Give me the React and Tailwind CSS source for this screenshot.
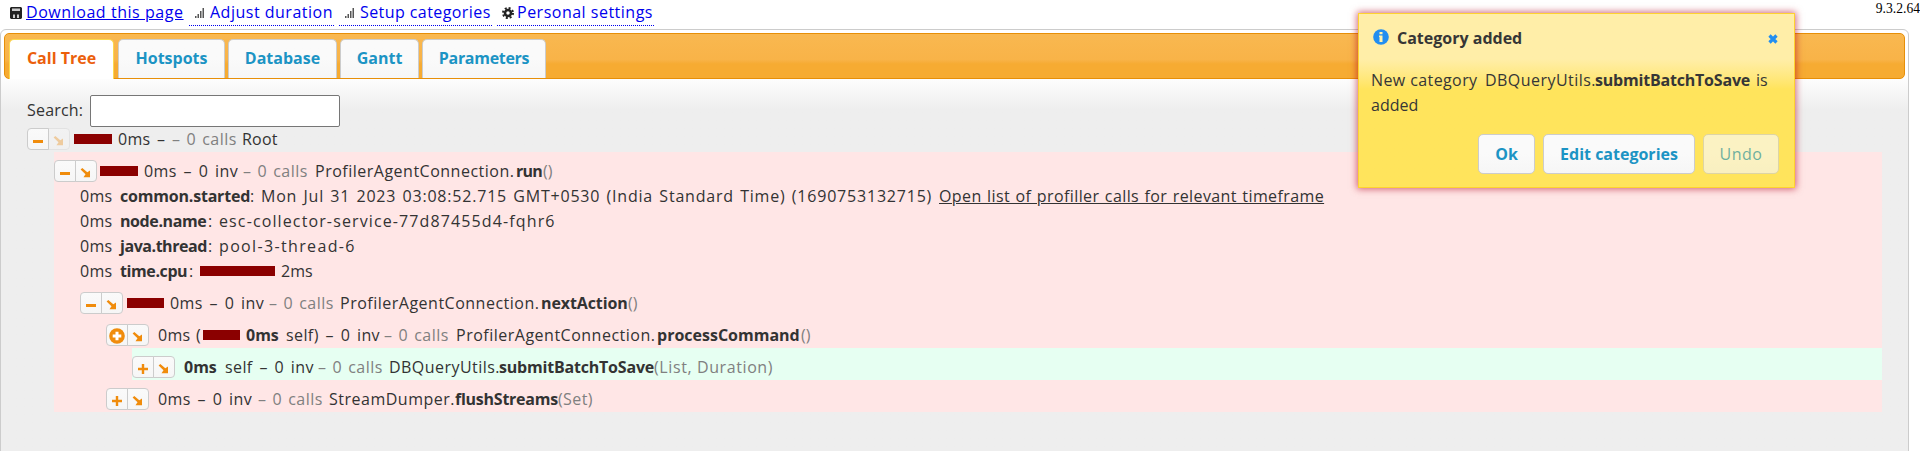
const dim = 'text-[#808080]';
const calls = 'text-[#808080] tracking-[0.45px] [word-spacing:1.5px]';
const inv = 'tracking-[0.4px] [word-spacing:2.2px]';

function Seg({ c = '', children }) {
  return <span className={`block shrink-0 whitespace-pre ${c}`}>{children}</span>;
}

function Bar({ c = 'w-[38px] mr-[6px]' }) {
  return <span className={`relative -top-px block h-[10px] shrink-0 bg-[#8b0000] ${c}`} />;
}

function Glyph({ kind }) {
  return (
    <svg width="16" height="16" viewBox="0 -1 16 16" className="block shrink-0 overflow-visible">
      {kind === 'minus' && <path d="M3 8h10v3H3z" fill="#f08c0c" />}
      {kind === 'plus' && <path d="M6.800 4h2.400v3.800H13v2.400H9.200V14H6.800v-3.800H3V7.800h3.800z" fill="#f08c0c" />}
      {kind === 'circle' && (
        <>
          <circle cx="8" cy="8" r="7.8" fill="#f08c0c" />
          <path d="M6.500 3.700h3v2.800h2.800v3H9.500v2.800h-3V9.500H3.700v-3h2.800z" fill="#fff" />
        </>
      )}
      {kind === 'arrow' && (
        <path d="M2.600 5.600 4.300 4l5 4.300 2.700-1.800V13.200H5.500L7.500 10.300z" fill="#f08c0c" />
      )}
    </svg>
  );
}

function Buttons({ kind, off = false, c = '' }) {
  return (
    <span className={`mt-[8px] flex h-[22px] shrink-0 self-start ${c}`}>
      <span className="flex w-[22px] items-center justify-center rounded-l-[4px] border border-[#ccc] bg-linear-to-b from-[#fafafa] to-[#f6f6f6]">
        <Glyph kind={kind} />
      </span>
      <span
        className={`-ml-px flex w-[22px] items-center justify-center rounded-r-[4px] border border-[#ccc] bg-linear-to-b from-[#fafafa] to-[#f6f6f6] ${off ? 'opacity-35' : ''}`}
      >
        <Glyph kind="arrow" />
      </span>
    </span>
  );
}

function Row({ c = '', children }) {
  return <div className={`flex h-[32px] items-center pt-[7px] ${c}`}>{children}</div>;
}

function Lead({ children }) {
  return <div className="-mt-[7px] flex h-[32px] shrink-0">{children}</div>;
}

function Meta({ name, w, children }) {
  return (
    <div className="flex h-[25px] items-center pl-[26px]">
      <Seg c="w-[40px] tracking-[0.3px]">0ms</Seg>
      <Seg c={`font-bold ${w}`}>{name}</Seg>
      <Seg c="w-[11px]">:</Seg>
      {children}
    </div>
  );
}

function Bars() {
  return (
    <svg width="10" height="10" viewBox="0 0 10 10" className="block shrink-0">
      <path d="M0 8h1.500v2H0zM2.500 6h1.500v4H2.500zM5 3h1.500v7H5zM7.500 0H9v10H7.500z" fill="#555" />
    </svg>
  );
}

function Tab({ c, children }) {
  return (
    <div
      className={`flex shrink-0 items-center justify-center rounded-t-[5px] border border-b-0 border-[#ccc] bg-linear-to-b from-[#fafafa] from-50% to-[#f6f6f6] font-bold ${c}`}
    >
      {children}
    </div>
  );
}

function Btn({ c, children }) {
  return (
    <div
      className={`flex h-[40px] items-center justify-center rounded-[5px] border border-[#ccc] bg-linear-to-b from-[#fafafa] from-50% to-[#f6f6f6] text-[#1c94c4] ${c}`}
    >
      {children}
    </div>
  );
}

export default function App() {
  return (
    <div className="relative h-[451px] w-[1920px] overflow-hidden bg-white font-['Open_Sans',sans-serif] text-[16px] leading-[25px] text-[#333]">
      <div className="flex h-[29px] justify-between">
        <div className="flex text-[#0000ee]">
          <div className="flex h-[25px] items-center pl-[10px]">
            <svg width="12" height="12" viewBox="0 0 12 12" className="mr-[4px] block">
              <path d="M1 0h10l1 1v10l-1 1H1l-1-1V1z" fill="#222" />
              <path d="M2 1.500h8v2.500H2zM3 7.500h2V11H3zM7 7.500h2V11H7z" fill="#ccc" />
            </svg>
            <Seg c="w-[158px] tracking-[0.55px] underline">Download this page</Seg>
          </div>
          <div className="ml-[5px] flex h-[26px] w-[145px] items-center border-b border-dotted border-[#0000ee] pl-[6px]">
            <Bars />
            <Seg c="ml-[5px] tracking-[0.5px]">Adjust duration</Seg>
          </div>
          <div className="ml-[5px] flex h-[26px] w-[153px] items-center border-b border-dotted border-[#0000ee] pl-[6px]">
            <Bars />
            <Seg c="ml-[5px] tracking-[0.42px]">Setup categories</Seg>
          </div>
          <div className="ml-[5px] flex h-[26px] w-[157px] items-center border-b border-dotted border-[#0000ee] pl-[5px]">
            <svg width="12" height="12" viewBox="0 0 12 12" className="mr-[3px] block">
              <circle cx="6" cy="6" r="3" fill="none" stroke="#222" strokeWidth="2.500" />
              <circle cx="6" cy="6" r="5" fill="none" stroke="#222" strokeWidth="2" strokeDasharray="2 1.930" />
            </svg>
            <Seg c="tracking-[0.5px]">Personal settings</Seg>
          </div>
        </div>
        <div className="pt-px font-['Liberation_Serif',serif] text-[13.600px] leading-[15px] text-black">9.3.2.64</div>
      </div>

      <div className="h-[440px] w-[1909px] rounded-t-[6px] border border-[#ccc] bg-[#eee] bg-linear-to-b from-white from-[46px] to-[#eee] to-[80px] px-[3px] pt-[3px]">
        <div className="flex h-[46px] items-end rounded-[5px] border border-[#e78f08] bg-linear-to-b from-[#f9b850] via-[#f8b348] via-58% to-[#f6ab32] to-68% pl-[4px]">
          <Tab c="-mb-px mr-[4px] h-[40px] w-[105px] border-[#fbd850] from-white to-white pb-[3px] text-[#eb5f0c]">Call Tree</Tab>
          <Tab c="mr-[3px] h-[39px] w-[107px] pb-[2px] text-[#1c94c4]">Hotspots</Tab>
          <Tab c="mr-[3px] h-[39px] w-[109px] pb-[2px] text-[#1c94c4]">Database</Tab>
          <Tab c="mr-[3px] h-[39px] w-[79px] pb-[2px] text-[#1c94c4]">Gantt</Tab>
          <Tab c="h-[39px] w-[124px] pb-[2px] tracking-[-0.3px] text-[#1c94c4]">Parameters</Tab>
        </div>

        <div className="flex h-[41px] pt-[16px] pl-[23px]">
          <span className="flex h-[32px] w-[63px] shrink-0 items-center pb-[2px] tracking-[0.2px]">Search:</span>
          <div className="h-[32px] w-[250px] shrink-0 rounded-[2px] border border-[#767676] bg-white" />
        </div>

        <div className="w-[1855px] pl-[23px]">
          <Row>
            <Lead><Buttons kind="minus" off c="mr-[4px]" /></Lead>
            <Bar />
            <Seg c="w-[39px] tracking-[0.3px]">0ms</Seg>
            <Seg c="w-[15px]">–</Seg>
            <Seg c={`w-[70px] ${calls}`}>– 0 calls</Seg>
            <Seg c="tracking-[0.2px]">Root</Seg>
          </Row>
          <div className="ml-[27px] w-[1828px] bg-[#ffe6e6]">
            <Row>
              <Lead><Buttons kind="minus" c="mr-[3px]" /></Lead>
              <Bar />
              <Seg c={`w-[99px] ${inv}`}>0ms – 0 inv</Seg>
              <Seg c={`w-[72px] ${calls}`}>– 0 calls</Seg>
              <Seg c="w-[201px] tracking-[0.5px]">ProfilerAgentConnection.</Seg>
              <Seg c="w-[27px] font-bold tracking-[-0.8px]">run</Seg>
              <Seg c={dim}>()</Seg>
            </Row>
            <Meta name="common.started" w="w-[130px] tracking-[-0.2px]">
              <Seg c="w-[678px] tracking-[0.8px] [word-spacing:1.300px]">Mon Jul 31 2023 03:08:52.715 GMT+0530 (India Standard Time) (1690753132715)</Seg>
              <Seg c="tracking-[0.4px] underline [word-spacing:0.900px]">Open list of profiller calls for relevant timeframe</Seg>
            </Meta>
            <Meta name="node.name" w="w-[88px] tracking-[-0.4px]"><Seg c="tracking-[1.120px]">esc-collector-service-77d87455d4-fqhr6</Seg></Meta>
            <Meta name="java.thread" w="w-[88px] tracking-[-0.45px]"><Seg c="tracking-[1.350px]">pool-3-thread-6</Seg></Meta>
            <Meta name="time.cpu" w="w-[69px] tracking-[-0.4px]"><Bar c="w-[75px] mr-[6px]" /><Seg>2ms</Seg></Meta>
            <Row c="pl-[26px]">
              <Lead><Buttons kind="minus" c="mr-[4px]" /></Lead>
              <Bar c="w-[37px] mr-[6px]" />
              <Seg c={`w-[99px] ${inv}`}>0ms – 0 inv</Seg>
              <Seg c={`w-[71px] ${calls}`}>– 0 calls</Seg>
              <Seg c="w-[201px] tracking-[0.5px]">ProfilerAgentConnection.</Seg>
              <Seg c="w-[87px] font-bold tracking-[-0.1px]">nextAction</Seg>
              <Seg c={dim}>()</Seg>
            </Row>
            <Row c="pl-[52px]">
              <Lead><Buttons kind="circle" c="mr-[9px]" /></Lead>
              <Seg c="w-[45px] tracking-[0.3px] [word-spacing:1px]">0ms (</Seg>
              <Bar c="w-[37px] mr-[6px]" />
              <Seg c="w-[40px] font-bold">0ms</Seg>
              <Seg c={`w-[98px] ${inv}`}>self) – 0 inv</Seg>
              <Seg c={`w-[72px] ${calls}`}>– 0 calls</Seg>
              <Seg c="w-[201px] tracking-[0.5px]">ProfilerAgentConnection.</Seg>
              <Seg c="w-[144px] font-bold">processCommand</Seg>
              <Seg c={dim}>()</Seg>
            </Row>
            <Row c="ml-[78px] bg-[#e6fff2]">
              <Lead><Buttons kind="plus" c="mr-[9px]" /></Lead>
              <Seg c="w-[41px] font-bold">0ms</Seg>
              <Seg c={`w-[93px] ${inv}`}>self – 0 inv</Seg>
              <Seg c={`w-[71px] ${calls}`}>– 0 calls</Seg>
              <Seg c="w-[110px] tracking-[0.450px]">DBQueryUtils.</Seg>
              <Seg c="w-[155px] font-bold tracking-[-0.2px]">submitBatchToSave</Seg>
              <Seg c={`tracking-[0.6px] ${dim}`}>(List, Duration)</Seg>
            </Row>
            <Row c="pl-[52px]">
              <Lead><Buttons kind="plus" c="mr-[9px]" /></Lead>
              <Seg c={`w-[100px] ${inv}`}>0ms – 0 inv</Seg>
              <Seg c={`w-[71px] ${calls}`}>– 0 calls</Seg>
              <Seg c="w-[126px] tracking-[0.5px]">StreamDumper.</Seg>
              <Seg c="w-[103px] font-bold tracking-[-0.25px]">flushStreams</Seg>
              <Seg c={`tracking-[0.4px] ${dim}`}>(Set)</Seg>
            </Row>
          </div>
        </div>
      </div>

      <div className="absolute top-[13px] left-[1358px] h-[175px] w-[437px] border border-[#fed22f] bg-linear-to-b from-[#ffeea8] from-[45px] to-[#ffe45c] to-[75px] px-[12px] text-[#363636] shadow-[0_0_7px_1px_#b0002099]">
        <div className="flex h-[49px] items-center pl-[2px]">
          <svg width="16" height="16" viewBox="0 0 16 16" className="relative -top-[2px] mr-[8px] block">
            <circle cx="8" cy="8" r="7.800" fill="#228ef1" />
            <path d="M6.500 3h3v2.200h-3zM6 6.500h3.500V13h-3V8H6z" fill="#fff3b0" />
          </svg>
          <span className="font-bold">Category added</span>
          <svg width="10" height="10" viewBox="0 0 10 10" className="mr-[4px] ml-auto block">
            <path d="M1.500 1.500l7 7m0-7l-7 7" stroke="#228ef1" strokeWidth="3.200" />
          </svg>
        </div>
        <div className="mt-[5px] flex h-[25px]">
          <Seg c="w-[114px] tracking-[0.4px]">New category </Seg>
          <Seg c="w-[110px] tracking-[0.45px]">DBQueryUtils.</Seg>
          <Seg c="w-[161px] font-bold tracking-[-0.2px]">submitBatchToSave</Seg>
          <Seg>is</Seg>
        </div>
        <div className="h-[25px]">added</div>
        <div className="mt-[16px] flex justify-end pr-[3px]">
          <Btn c="mr-[8px] w-[57px] font-bold">Ok</Btn>
          <Btn c="mr-[8px] w-[152px] font-bold">Edit categories</Btn>
          <Btn c="w-[76px] tracking-[0.5px] opacity-65">Undo</Btn>
        </div>
      </div>
    </div>
  );
}
